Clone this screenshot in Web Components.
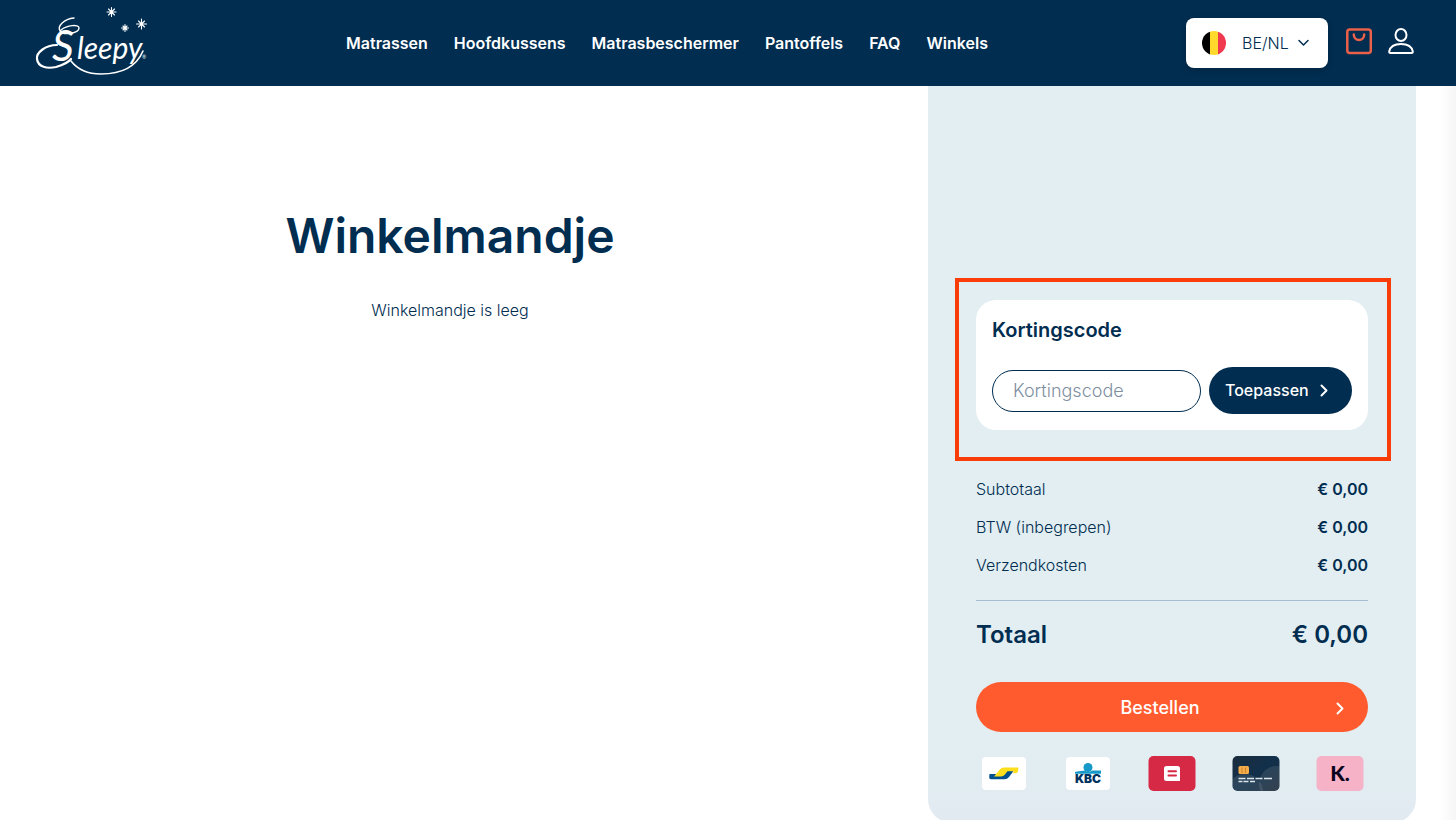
<!DOCTYPE html>
<html lang="nl">
<head>
<meta charset="utf-8">
<meta name="viewport" content="width=device-width, initial-scale=1">
<title>Winkelmandje | Sleepy</title>
<style>
  :root {
    --navy: #002d50;
    --orange: #ff5b2e;
    --ice: #e2eef2;
  }

  body {
    margin: 0;
    min-height: 100vh;
    color: var(--navy);
    font-family: Inter, "Open Sans", sans-serif;
    font-size: 16px;
    line-height: 24px;
    background: linear-gradient(to left, #f6f6f6, #fff 16px);
  }
</style>
</head>
<body>
<shop-header>
  <shop-logo slot="logo"></shop-logo>
  <nav-link href="#matrassen">Matrassen</nav-link>
  <nav-link href="#hoofdkussens">Hoofdkussens</nav-link>
  <nav-link href="#matrasbeschermer">Matrasbeschermer</nav-link>
  <nav-link href="#pantoffels">Pantoffels</nav-link>
  <nav-link href="#faq">FAQ</nav-link>
  <nav-link href="#winkels">Winkels</nav-link>
  <locale-picker slot="tools"></locale-picker>
  <account-links slot="tools"></account-links>
</shop-header>
<cart-page>
  <span slot="title">Winkelmandje</span>
  <span slot="message">Winkelmandje is leeg</span>
  <order-summary slot="summary">
    <discount-form slot="discount"></discount-form>
    <price-row label="Subtotaal">€ 0,00</price-row>
    <price-row label="BTW (inbegrepen)">€ 0,00</price-row>
    <price-row label="Verzendkosten">€ 0,00</price-row>
    <price-row slot="total" class="total" label="Totaal">€ 0,00</price-row>
    <payment-methods slot="payments"></payment-methods>
  </order-summary>
</cart-page>

<script>
class ShopHeader extends HTMLElement {
  constructor() {
    super();
    this.attachShadow({ mode: 'open' });
    this.shadowRoot.innerHTML = `
      <style>
        :host {
          display: block;
          background: var(--navy);
        }

        header {
          display: flex;
          justify-content: space-between;
          align-items: center;
          height: 86px;
          padding: 0 40px 0 32px;
        }

        nav {
          display: flex;
          gap: 26px;
        }

        .tools {
          display: flex;
          align-items: center;
          gap: 16px;
        }
      </style>
      <header>
        <slot name="logo"></slot>
        <nav aria-label="Hoofdmenu"><slot></slot></nav>
        <div class="tools"><slot name="tools"></slot></div>
      </header>
    `;
  }
}

customElements.define('shop-header', ShopHeader);

class ShopLogo extends HTMLElement {
  constructor() {
    super();
    this.attachShadow({ mode: 'open' });
    this.shadowRoot.innerHTML = `
      <style>
        :host {
          display: block;
        }

        a {
          display: block;
          color: #fff;
        }

        svg {
          display: block;
        }

        text {
          font-family: Lato, "Open Sans", sans-serif;
          font-style: italic;
          fill: currentColor;
        }
      </style>
      <a href="#home" aria-label="Sleepy">
        <svg width="116" height="76" viewBox="0 0 116 76" fill="none" stroke="currentColor" stroke-linecap="round">
          <text x="20" y="56" font-size="30" stroke="none"><tspan font-size="43">S</tspan><tspan x="45" y="54">leepy</tspan></text>
          <text x="110" y="54" font-size="5" stroke="none">®</text>
          <path d="M42 13C32 14 25 21 28 26C32 31 47 28 47 23C47 19 35 20 29 25" stroke-width="1.4"/>
          <path d="M25 40C13 40 4 48 5 54C6 62 15 64 24 62C31 60 36 58 39 54" stroke-width="2.2"/>
          <path d="M39 56C46 65 57 69 69 69C92 69 105 60 111 46" stroke-width="1.6"/>
          <path d="M79.500 2.500v9M75 7h9M76.500 4l6 6M82.500 4l-6 6M93 19.500v7M89.500 23h7M91 21l4 4M95 21l-4 4M109.500 14v10M104.500 19h10M106.500 16l6 6M112.500 16l-6 6" stroke-width="1.1"/>
        </svg>
      </a>
    `;
  }
}

customElements.define('shop-logo', ShopLogo);

class NavLink extends HTMLElement {
  constructor() {
    super();
    this.attachShadow({ mode: 'open' });
    this.shadowRoot.innerHTML = `
      <style>
        :host {
          display: block;
        }

        a {
          color: #fff;
          font-weight: 600;
          text-decoration: none;
        }
      </style>
      <a><slot></slot></a>
    `;
  }

  connectedCallback() {
    this.shadowRoot.querySelector('a').href = this.getAttribute('href');
  }
}

customElements.define('nav-link', NavLink);

class LocalePicker extends HTMLElement {
  constructor() {
    super();
    this.attachShadow({ mode: 'open' });
    this.shadowRoot.innerHTML = `
      <style>
        :host {
          display: block;
        }

        label {
          display: flex;
          align-items: center;
          box-sizing: border-box;
          width: 142px;
          height: 50px;
          padding: 0 16px;
          border-radius: 8px;
          background: #fff;
          color: var(--navy);
          box-shadow: 0 2px 6px rgba(0, 0, 0, .2);
        }

        select {
          flex: 1;
          min-width: 0;
          margin: 0 0 0 16px;
          padding: 0;
          border: 0;
          appearance: none;
          background: none;
          color: inherit;
          font: inherit;
          font-weight: 300;
        }

        .chevron {
          pointer-events: none;
        }
      </style>
      <label>
        <svg width="24" height="24" viewBox="0 0 24 24" aria-hidden="true">
          <clipPath id="round"><circle cx="12" cy="12" r="12"/></clipPath>
          <g clip-path="url(#round)">
            <path fill="#000" d="M0 0h8v24H0z"/>
            <path fill="#ffda2c" d="M8 0h8v24H8z"/>
            <path fill="#f0384f" d="M16 0h8v24h-8z"/>
          </g>
        </svg>
        <select aria-label="Land en taal">
          <option>BE/NL</option>
          <option>BE/FR</option>
          <option>NL/NL</option>
        </select>
        <svg class="chevron" width="16" height="16" viewBox="0 0 16 16" fill="none" stroke="currentColor" stroke-width="1.5" stroke-linecap="round" stroke-linejoin="round" aria-hidden="true">
          <path d="M3 5.500l4.500 4.500 4.500-4.500"/>
        </svg>
      </label>
    `;
  }
}

customElements.define('locale-picker', LocalePicker);

class AccountLinks extends HTMLElement {
  constructor() {
    super();
    this.attachShadow({ mode: 'open' });
    this.shadowRoot.innerHTML = `
      <style>
        :host {
          display: flex;
          gap: 12px;
          padding-bottom: 4px;
        }

        a {
          color: #fff;
        }

        .cart {
          color: #ea6048;
        }

        svg {
          display: block;
        }
      </style>
      <a class="cart" href="#winkelmandje" aria-label="Winkelmandje">
        <svg width="30" height="30" viewBox="0 0 30 30" fill="none" stroke="currentColor" stroke-width="2.500" stroke-linecap="round">
          <rect x="3.300" y="3.500" width="23.500" height="23.500" rx="2.500"/>
          <path d="M9.800 8.500c0 3 2.200 5.500 5.200 5.500s5.200-2.500 5.200-5.500"/>
        </svg>
      </a>
      <a href="#account" aria-label="Mijn account">
        <svg width="30" height="30" viewBox="0 0 30 30" fill="none" stroke="currentColor" stroke-width="2" stroke-linejoin="round">
          <ellipse cx="15" cy="9" rx="5.500" ry="6"/>
          <path d="M4.500 27h21q1.500 0 1.300-1.500C25.900 21 21.500 18 15 18S4.100 21 3.200 25.500Q3 27 4.500 27z"/>
        </svg>
      </a>
    `;
  }
}

customElements.define('account-links', AccountLinks);

class CartPage extends HTMLElement {
  constructor() {
    super();
    this.attachShadow({ mode: 'open' });
    this.shadowRoot.innerHTML = `
      <style>
        :host {
          display: grid;
          grid-template-columns: 1fr 488px;
          gap: 28px;
          padding-right: 40px;
        }

        main {
          padding-top: 118px;
          text-align: center;
        }

        h1 {
          margin: 0 0 30px;
          font-size: 48px;
          line-height: 64px;
          font-weight: 600;
        }

        p {
          margin: 0;
          font-weight: 300;
        }
      </style>
      <main>
        <h1><slot name="title"></slot></h1>
        <p><slot name="message"></slot></p>
      </main>
      <slot name="summary"></slot>
    `;
  }
}

customElements.define('cart-page', CartPage);

class OrderSummary extends HTMLElement {
  constructor() {
    super();
    this.attachShadow({ mode: 'open' });
    this.shadowRoot.innerHTML = `
      <style>
        :host {
          display: block;
          padding: 214px 48px 32px;
          border-radius: 0 0 24px 24px;
          background: linear-gradient(var(--ice) 90%, #e1eaf1);
        }

        .rows {
          display: grid;
          gap: 14px;
          margin-top: 47px;
          padding-bottom: 23px;
          border-bottom: 1px solid #a9bdd0;
        }

        .order {
          display: flex;
          align-items: center;
          width: 100%;
          height: 50px;
          margin: 31px 0 24px;
          padding: 2px 20px 0 12px;
          border: 0;
          border-radius: 25px;
          background: var(--orange);
          color: #fff;
          font: inherit;
          font-size: 18px;
          font-weight: 500;
        }

        .order span {
          flex: 1;
        }
      </style>
      <slot name="discount"></slot>
      <div class="rows"><slot></slot></div>
      <slot name="total"></slot>
      <button class="order" type="button">
        <span>Bestellen</span>
        <svg width="16" height="16" viewBox="0 0 16 16" fill="none" stroke="currentColor" stroke-width="2" stroke-linecap="round" stroke-linejoin="round" aria-hidden="true">
          <path d="M5.500 3.500l5 5-5 5"/>
        </svg>
      </button>
      <slot name="payments"></slot>
    `;
  }
}

customElements.define('order-summary', OrderSummary);

class DiscountForm extends HTMLElement {
  constructor() {
    super();
    this.attachShadow({ mode: 'open' });
    this.shadowRoot.innerHTML = `
      <style>
        :host {
          display: block;
          position: relative;
        }

        /* highlight frame around the card */
        :host::after {
          content: "";
          position: absolute;
          inset: -22px -23px -31px -21px;
          border: 4px solid #f93c08;
          pointer-events: none;
        }

        form {
          padding: 16px;
          border-radius: 20px;
          background: #fff;
        }

        label {
          display: block;
          margin-bottom: 23px;
          font-size: 20px;
          line-height: 28px;
          font-weight: 600;
        }

        .fields {
          display: flex;
          align-items: center;
          gap: 8px;
        }

        input {
          flex: 1;
          min-width: 0;
          box-sizing: border-box;
          height: 42px;
          padding: 0 20px;
          border: 1px solid var(--navy);
          border-radius: 21px;
          background: #fff;
          color: var(--navy);
          font: inherit;
          font-size: 18px;
          font-weight: 300;
        }

        input::placeholder {
          color: #7f8fa1;
          opacity: 1;
        }

        button {
          display: flex;
          align-items: center;
          justify-content: space-between;
          width: 143px;
          height: 47px;
          padding: 0 20px 1px 16px;
          border: 0;
          border-radius: 24px;
          background: var(--navy);
          color: #fff;
          font: inherit;
          font-weight: 500;
        }
      </style>
      <form>
        <label for="code">Kortingscode</label>
        <div class="fields">
          <input id="code" type="text" placeholder="Kortingscode">
          <button type="button">
            Toepassen
            <svg width="16" height="16" viewBox="0 0 16 16" fill="none" stroke="currentColor" stroke-width="2" stroke-linecap="round" stroke-linejoin="round" aria-hidden="true">
              <path d="M5.500 3.500l5 5-5 5"/>
            </svg>
          </button>
        </div>
      </form>
    `;
  }
}

customElements.define('discount-form', DiscountForm);

class PriceRow extends HTMLElement {
  constructor() {
    super();
    this.attachShadow({ mode: 'open' });
    this.shadowRoot.innerHTML = `
      <style>
        :host {
          display: flex;
          justify-content: space-between;
          font-weight: 300;
        }

        b {
          font-weight: 600;
        }

        :host(.total) {
          margin-top: 18px;
          font-size: 24px;
          line-height: 32px;
          font-weight: 600;
        }
      </style>
      <span></span>
      <b><slot></slot></b>
    `;
  }

  connectedCallback() {
    this.shadowRoot.querySelector('span').textContent = this.getAttribute('label');
  }
}

customElements.define('price-row', PriceRow);

class PaymentMethods extends HTMLElement {
  constructor() {
    super();
    this.attachShadow({ mode: 'open' });
    this.shadowRoot.innerHTML = `
      <style>
        :host {
          display: block;
        }

        ul {
          display: flex;
          justify-content: space-between;
          margin: 0;
          padding: 0;
          list-style: none;
        }

        li {
          display: flex;
          justify-content: center;
          width: 56px;
        }

        svg {
          display: block;
        }

        text {
          font-family: Inter, sans-serif;
          font-weight: 900;
        }

        .klarna {
          font-family: Lato, sans-serif;
        }
      </style>
      <ul>
        <li>
          <svg width="48" height="35" viewBox="0 0 48 35" role="img" aria-label="Belfius">
            <rect x="2" y="1" width="44" height="33" rx="4" fill="#fff"/>
            <path fill="#00508f" d="M9.500 18h7l7-3h10l-4.500 6q-1.700 2.300-4.500 2.300H11q-2 0-1.800-2.300z"/>
            <path fill="#ffdf1b" d="M14 20.500l6-7.200q1.500-1.800 4-1.800h14.500l-.5 3.500q-.4 2.300-2.500 2.300h-2.700l1.200-2h-6.500l-2.800 3.500q-1.300 1.700-3.700 1.700z"/>
          </svg>
        </li>
        <li>
          <svg width="48" height="35" viewBox="0 0 48 35" role="img" aria-label="KBC">
            <rect x="2" y="1" width="44" height="33" rx="4" fill="#fff"/>
            <circle cx="24" cy="11.500" r="4.500" fill="#1699c8"/>
            <path fill="#1699c8" d="M11 16q7-1.500 10-1.500 1.500 1.500 3 1.500t4.500-1.500H37v3.200H11z"/>
            <text x="24" y="27" font-size="12" text-anchor="middle" fill="#00325f">KBC</text>
          </svg>
        </li>
        <li>
          <svg width="48" height="35" viewBox="0 0 48 35" role="img" aria-label="Bancontact">
            <rect x=".5" width="47" height="35" rx="5" fill="#d62946"/>
            <path fill="#fff" d="M18.500 10h11q2.500 0 2.500 2.500V25H18.500Q16 25 16 22.500v-10Q16 10 18.500 10z"/>
            <path stroke="#d62946" stroke-width="2" stroke-linecap="round" d="M20.500 15.300h7.500M20.500 19.500h7.500"/>
          </svg>
        </li>
        <li>
          <svg width="48" height="35" viewBox="0 0 48 35" role="img" aria-label="Creditcard">
            <linearGradient id="card" x2="1" y2="1">
              <stop stop-color="#1b2c3d"/>
              <stop offset=".5" stop-color="#12304b"/>
              <stop offset="1" stop-color="#1d2c3b"/>
            </linearGradient>
            <clipPath id="edge"><rect x=".5" width="47" height="35" rx="5"/></clipPath>
            <g clip-path="url(#edge)">
              <path fill="url(#card)" d="M0 0h48v35H0z"/>
              <circle cx="13" cy="36" r="18" fill="#fff" fill-opacity=".1"/>
              <circle cx="45" cy="28" r="18" fill="#fff" fill-opacity=".1"/>
            </g>
            <rect x="6.500" y="10" width="10.500" height="8" rx="1.500" fill="#f5ad4b"/>
            <path stroke="#b97320" stroke-width=".7" d="M10 11.500v5.500M13.500 11.500v5.500"/>
            <path stroke="#dce5eb" stroke-width="1.500" d="M6.500 22.500h7M15 22.500h7M23.500 22.500h7M32 22.500h8M6.500 25.500h4M11.500 25.500h5M18 25.500h5"/>
          </svg>
        </li>
        <li>
          <svg width="48" height="35" viewBox="0 0 48 35" role="img" aria-label="Klarna">
            <rect x=".5" width="47" height="35" rx="5" fill="#f6b3c7"/>
            <text class="klarna" x="24" y="25" font-size="21" text-anchor="middle" fill="#0b051d">K.</text>
          </svg>
        </li>
      </ul>
    `;
  }
}

customElements.define('payment-methods', PaymentMethods);
</script>
</body>
</html>
